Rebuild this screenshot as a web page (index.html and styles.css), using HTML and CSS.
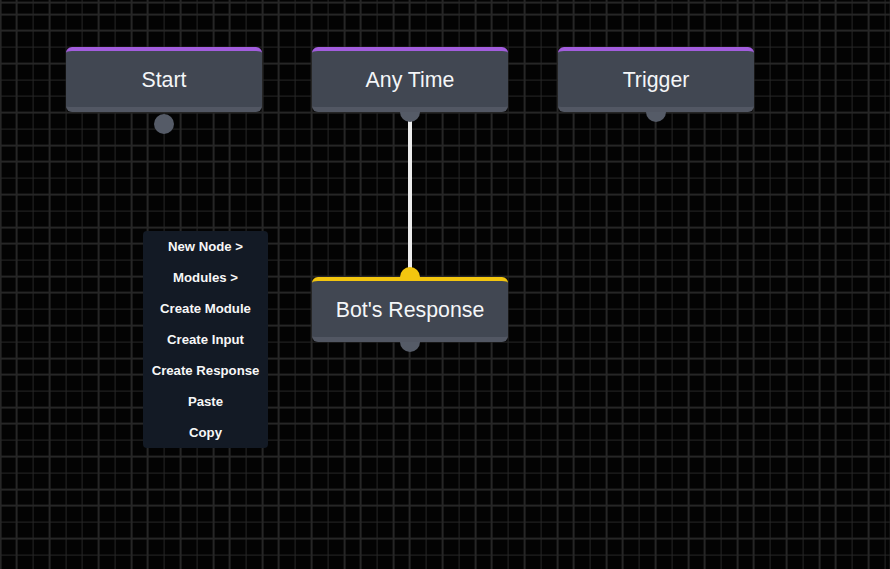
FILE: index.html
```html
<!DOCTYPE html>
<html lang="en">
<head>
<meta charset="utf-8">
<title>Flow editor</title>
<link rel="stylesheet" href="styles.css">
</head>
<body>
<div class="canvas">
  <svg class="wires" width="890" height="569" viewBox="0 0 890 569">
    <line x1="410" y1="118" x2="410" y2="270" stroke="#ececec" stroke-width="4"/>
  </svg>

  <div class="node node-start">
    <span class="port port-out port-detached"></span>
    <div class="node-body">Start</div>
  </div>

  <div class="node node-anytime">
    <span class="port port-out"></span>
    <div class="node-body">Any Time</div>
  </div>

  <div class="node node-trigger">
    <span class="port port-out"></span>
    <div class="node-body">Trigger</div>
  </div>

  <div class="node node-response response">
    <span class="port port-in"></span>
    <span class="port port-out"></span>
    <div class="node-body">Bot's Response</div>
  </div>

  <ul class="context-menu">
    <li>New Node &gt;</li>
    <li>Modules &gt;</li>
    <li>Create Module</li>
    <li>Create Input</li>
    <li>Create Response</li>
    <li>Paste</li>
    <li>Copy</li>
  </ul>
</div>
</body>
</html>
```

FILE: styles.css
```css
html, body {
  margin: 0;
  padding: 0;
  background: #000;
}

.canvas {
  position: relative;
  width: 890px;
  height: 569px;
  overflow: hidden;
  background-color: #030303;
  background-image:
    repeating-linear-gradient(to right, #262626 0 1.6px, transparent 1.6px 16.38px),
    repeating-linear-gradient(to bottom, #262626 0 1.6px, transparent 1.6px 16.38px);
  background-position: -0.4px 0, 0 13.6px;
  font-family: "Liberation Sans", Arial, sans-serif;
}

.wires {
  position: absolute;
  left: 0;
  top: 0;
  z-index: 1;
}

.node {
  position: absolute;
  width: 196px;
  height: 65px;
  box-sizing: border-box;
  z-index: 2;
}

.node-body {
  position: relative;
  z-index: 2;
  height: 100%;
  box-sizing: border-box;
  display: flex;
  align-items: center;
  justify-content: center;
  padding-top: 3px;
  background: #414752;
  border-top: 4px solid #a25ddd;
  border-bottom: 5px solid #525763;
  border-radius: 6px;
  color: #f4f6f8;
  font-size: 21.3px;
}

.response .node-body {
  border-top-color: #f2c50f;
}

.node-start   { left: 66px;  top: 47px; }
.node-anytime { left: 312px; top: 47px; }
.node-trigger { left: 558px; top: 47px; }
.node-response { left: 312px; top: 277px; }

.port {
  position: absolute;
  left: 50%;
  width: 20px;
  height: 20px;
  margin-left: -10px;
  border-radius: 50%;
  background: #555b67;
  z-index: 1;
}

.port-out {
  bottom: -10px;
}

.port-detached {
  bottom: -22px;
}

.port-in {
  top: -10px;
  background: #f2c50f;
}

.context-menu {
  position: absolute;
  left: 143px;
  top: 231px;
  width: 125px;
  margin: 0;
  padding: 0;
  list-style: none;
  background: #131a25;
  border-radius: 4px;
  z-index: 5;
}

.context-menu li {
  height: 31px;
  line-height: 31px;
  text-align: center;
  color: #f7f7f7;
  font-size: 13.2px;
  font-weight: bold;
  white-space: nowrap;
}
```
